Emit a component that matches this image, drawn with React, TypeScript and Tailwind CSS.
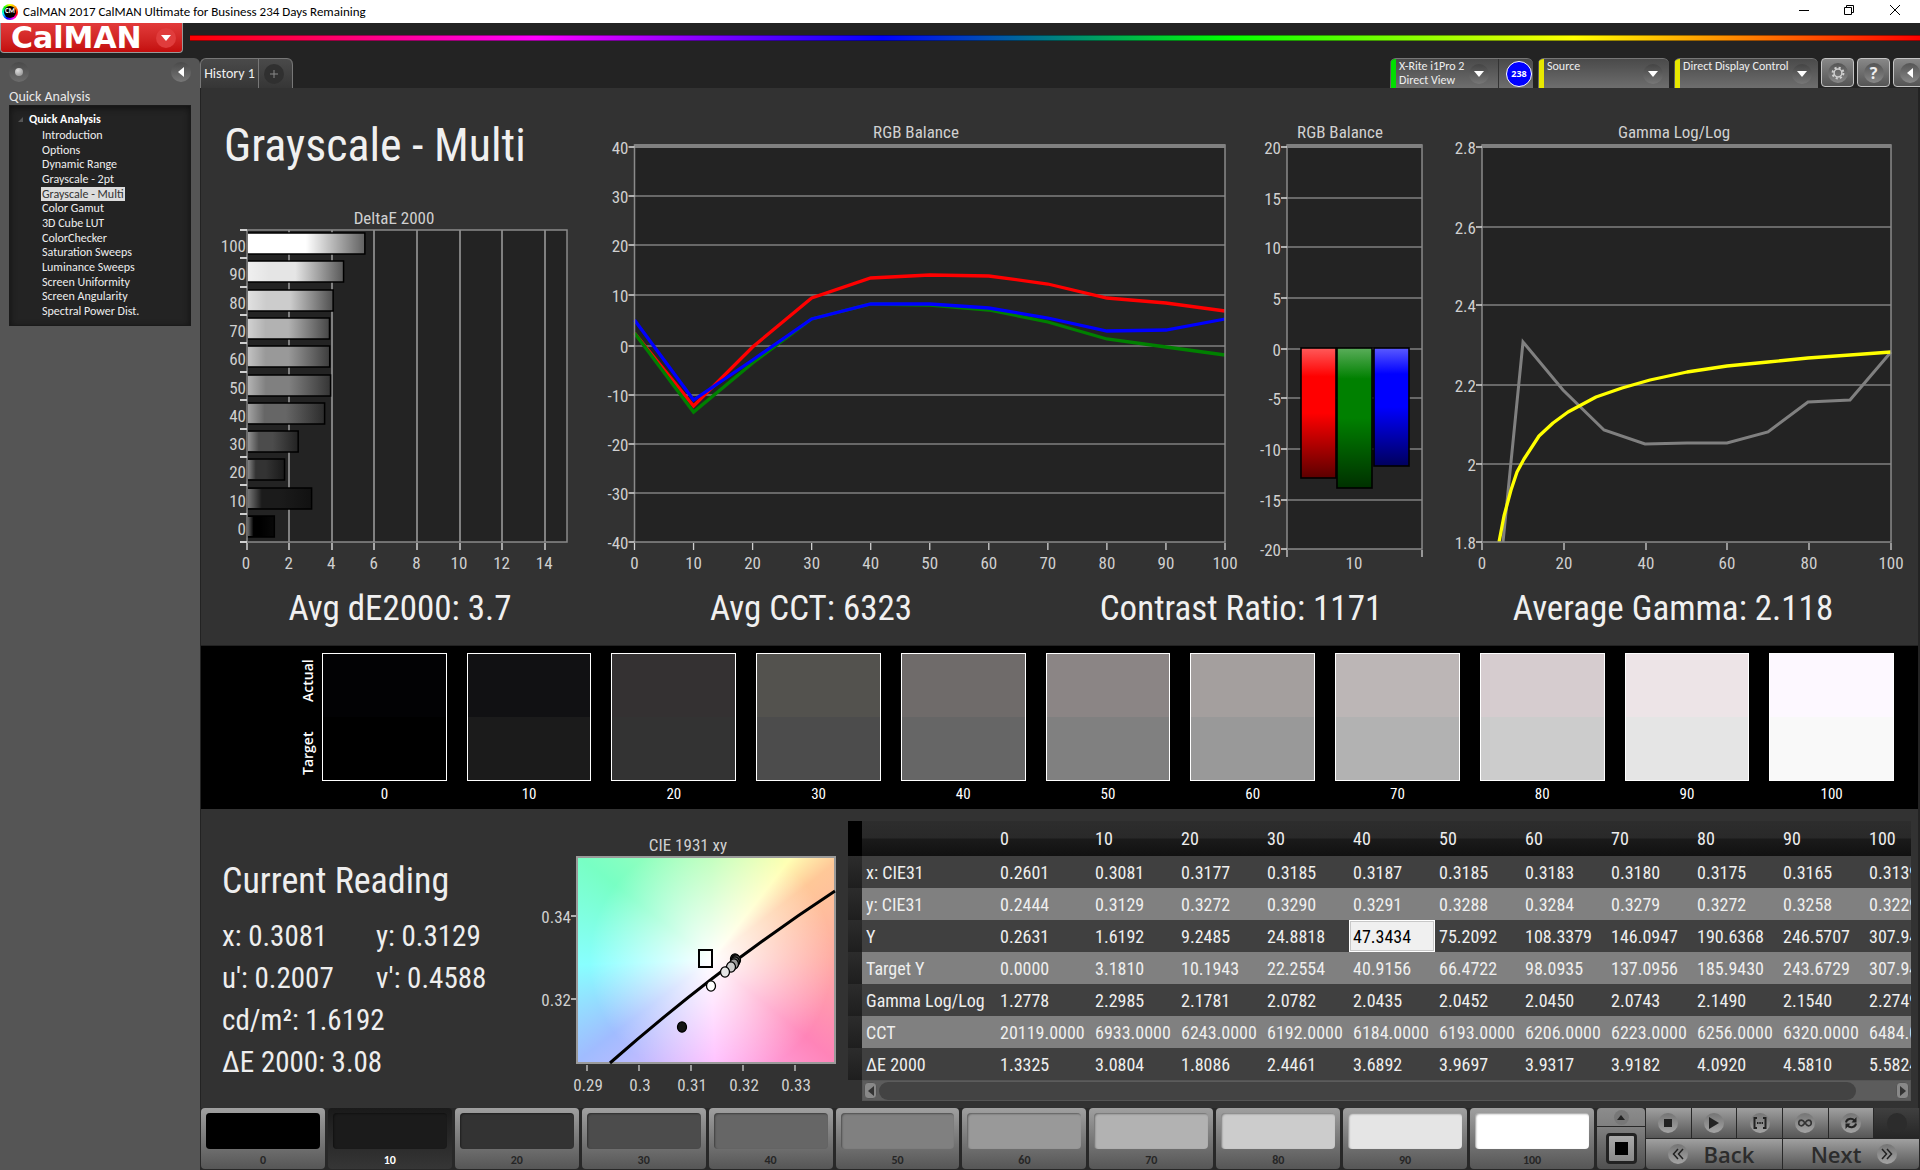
import React from "react";

const LEVELS = [0, 10, 20, 30, 40, 50, 60, 70, 80, 90, 100];
const NARROW = "font-['Roboto_Condensed',Roboto,sans-serif]";
const AXIS = "#d0d0d0";
const GRID = "#808080";
const PLOT = "#232323";

const MENU = [
  "Introduction",
  "Options",
  "Dynamic Range",
  "Grayscale - 2pt",
  "Grayscale - Multi",
  "Color Gamut",
  "3D Cube LUT",
  "ColorChecker",
  "Saturation Sweeps",
  "Luminance Sweeps",
  "Screen Uniformity",
  "Screen Angularity",
  "Spectral Power Dist.",
];

const SWATCHES = [
  ["#020204", "#000000"],
  ["#111113", "#1b1b1b"],
  ["#343132", "#333333"],
  ["#53524e", "#4c4c4c"],
  ["#6f6b6a", "#666666"],
  ["#8b8585", "#808080"],
  ["#a49f9e", "#999999"],
  ["#bcb6b6", "#b2b2b2"],
  ["#d6cccf", "#cccccc"],
  ["#ede4e7", "#e5e5e5"],
  ["#fdf8ff", "#f9f9f9"],
];

const TARGET = SWATCHES.map((s, i) => (i === 10 ? "#ffffff" : s[1]));

const ROWS: [string, string[]][] = [
  ["x: CIE31", ["0.2601", "0.3081", "0.3177", "0.3185", "0.3187", "0.3185", "0.3183", "0.3180", "0.3175", "0.3165", "0.3139"]],
  ["y: CIE31", ["0.2444", "0.3129", "0.3272", "0.3290", "0.3291", "0.3288", "0.3284", "0.3279", "0.3272", "0.3258", "0.3229"]],
  ["Y", ["0.2631", "1.6192", "9.2485", "24.8818", "47.3434", "75.2092", "108.3379", "146.0947", "190.6368", "246.5707", "307.9464"]],
  ["Target Y", ["0.0000", "3.1810", "10.1943", "22.2554", "40.9156", "66.4722", "98.0935", "137.0956", "185.9430", "243.6729", "307.9464"]],
  ["Gamma Log/Log", ["1.2778", "2.2985", "2.1781", "2.0782", "2.0435", "2.0452", "2.0450", "2.0743", "2.1490", "2.1540", "2.2749"]],
  ["CCT", ["20119.0000", "6933.0000", "6243.0000", "6192.0000", "6184.0000", "6193.0000", "6206.0000", "6223.0000", "6256.0000", "6320.0000", "6484.0000"]],
  ["ΔE 2000", ["1.3325", "3.0804", "1.8086", "2.4461", "3.6892", "3.9697", "3.9317", "3.9182", "4.0920", "4.5810", "5.5824"]],
];

type LabelProps = { x: number; y: number; anchor?: "middle" | "end"; children: React.ReactNode };

function Label({ x, y, anchor = "middle", children }: LabelProps) {
  return (
    <text x={x} y={y + 6} textAnchor={anchor} fill={AXIS} className={`${NARROW} text-[17px]`}>
      {children}
    </text>
  );
}

function DeltaEChart() {
  const values = [5.58, 4.58, 4.09, 3.92, 3.93, 3.97, 3.69, 2.45, 1.81, 3.08, 1.33];
  const unit = 21.3;
  return (
    <svg viewBox="201 200 389 376" className="block h-auto w-full" role="img" aria-label="DeltaE 2000">
      <defs>
        {values.map((_, i) => (
          <linearGradient key={i} id={`bar${i}`}>
            <stop offset="0" stopColor={TARGET[10 - i]} />
            <stop offset="0.5" stopColor={TARGET[10 - i]} />
            <stop offset="1" stopColor={TARGET[10 - i]} stopOpacity="0.35" />
          </linearGradient>
        ))}
        <linearGradient id="gloss">
          <stop offset="0" stopColor="#fff" stopOpacity="0.4" />
          <stop offset="0.22" stopColor="#fff" stopOpacity="0" />
        </linearGradient>
      </defs>
      <Label x={394} y={218}>DeltaE 2000</Label>
      <rect x="247" y="230" width="320" height="312" fill={PLOT} />
      {[2, 4, 6, 8, 10, 12, 14].map((v) => (
        <path key={v} d={`M${Math.round(246.5 + v * unit)} 230V542`} stroke={GRID} strokeWidth="2" />
      ))}
      {values.map((v, i) => {
        const y = Math.round(233 + i * 28.3);
        return (
          <g key={i}>
            <rect x="247" y={y} width={v * unit - 1} height="21" fill="#0c0c0c" />
            <rect x="247" y={y} width={v * unit - 1} height="21" fill={`url(#bar${i})`} stroke="#000" strokeWidth="1.5" />
            <rect x="248" y={y + 1} width={v * unit - 3} height="19" fill="url(#gloss)" />
            <Label x={246} y={y + 13} anchor="end">{100 - i * 10}</Label>
          </g>
        );
      })}
      <rect x="247" y="230" width="320" height="312" fill="none" stroke="#8a8a8a" strokeWidth="1.5" />
      {Array.from({ length: 12 }, (_, i) => (
        <path key={i} d={`M240 ${Math.round(230 + i * 28.36)}h7`} stroke={AXIS} strokeWidth="2" />
      ))}
      {[0, 2, 4, 6, 8, 10, 12, 14].map((v) => (
        <g key={v}>
          <path d={`M${Math.round(246.5 + v * unit)} 543v7`} stroke={AXIS} strokeWidth="1.5" />
          <Label x={246 + v * unit} y={563}>{v}</Label>
        </g>
      ))}
    </svg>
  );
}

type FrameProps = {
  x: number;
  width: number;
  bottom: number;
  ys: number[];
  yLabels: string[];
  xs: number[];
  xLabels: string[];
  children?: React.ReactNode;
};

function Frame({ x, width, bottom, ys, yLabels, xs, xLabels, children }: FrameProps) {
  return (
    <>
      <rect x={x} y="145" width={width} height={bottom - 145} fill={PLOT} />
      {ys.slice(1, -1).map((y) => (
        <path key={y} d={`M${x} ${y}h${width}`} stroke={GRID} strokeWidth="1.6" />
      ))}
      {children}
      <rect x={x} y="145" width={width} height={bottom - 145} fill="none" stroke="#8a8a8a" strokeWidth="1.5" />
      <rect x={x} y="144" width={width} height="4" fill={GRID} />
      {ys.map((y, i) => (
        <g key={y}>
          <path d={`M${x - 6} ${y}h6`} stroke={AXIS} strokeWidth="1.6" />
          <Label x={x - 6} y={y + 1} anchor="end">{yLabels[i]}</Label>
        </g>
      ))}
      {xs.map((tx, i) => (
        <g key={tx}>
          <path d={`M${tx} ${bottom + 1}v7`} stroke={AXIS} strokeWidth="1.3" />
          <Label x={tx} y={563}>{xLabels[i]}</Label>
        </g>
      ))}
    </>
  );
}

const line = (xs: number[], ys: number[]) => xs.map((x, i) => `${x},${ys[i]}`).join(" ");

function RgbLineChart() {
  const xs = LEVELS.map((v) => 634.5 + v * 5.905);
  const series: [string, number[]][] = [
    ["#ff0000", [333, 406, 347, 298, 278, 275, 276, 284, 298, 303, 311]],
    ["#008000", [333, 412, 363, 319, 304, 305, 310, 322, 339, 347, 355]],
    ["#0000ff", [320, 400, 360, 319, 304, 304, 308, 318, 331, 330, 319]],
  ];
  return (
    <svg viewBox="590 88 650 488" className="block h-auto w-full" role="img" aria-label="RGB Balance by level">
      <Label x={916} y={132}>RGB Balance</Label>
      <Frame
        x={634.5}
        width={590.5}
        bottom={542}
        ys={[147, 196, 245, 295, 346, 395, 444, 493, 542]}
        yLabels={["40", "30", "20", "10", "0", "-10", "-20", "-30", "-40"]}
        xs={xs}
        xLabels={LEVELS.map(String)}
      >
        {series.map(([color, ys]) => (
          <polyline key={color} points={line(xs, ys)} fill="none" stroke={color} strokeWidth="3.3" />
        ))}
      </Frame>
    </svg>
  );
}

function RgbBarChart() {
  const bars: [number, number, string, string, string][] = [
    [1301, 131, "#ff5a5a", "#ff0000", "#5c0000"],
    [1337, 141, "#5aad5a", "#008000", "#003000"],
    [1374, 119, "#5a5aff", "#0000ff", "#00005c"],
  ];
  return (
    <svg viewBox="1240 88 200 488" className="block h-auto w-full" role="img" aria-label="RGB Balance at 10">
      <defs>
        {bars.map(([x, , top, mid, end]) => (
          <linearGradient key={x} id={`rgb${x}`} x1="0" y1="0" x2="0" y2="1">
            <stop offset="0" stopColor={top} />
            <stop offset="0.22" stopColor={mid} />
            <stop offset="0.5" stopColor={mid} />
            <stop offset="1" stopColor={end} />
          </linearGradient>
        ))}
      </defs>
      <Label x={1340} y={132}>RGB Balance</Label>
      <Frame
        x={1287}
        width={135}
        bottom={549}
        ys={[147, 198, 247, 298, 349, 398, 449, 500, 549]}
        yLabels={["20", "15", "10", "5", "0", "-5", "-10", "-15", "-20"]}
        xs={[1287, 1422]}
        xLabels={["", ""]}
      >
        {bars.map(([x, h]) => (
          <rect key={x} x={x} y="348" width="35" height={h - 1} fill={`url(#rgb${x})`} stroke="#000" strokeWidth="1.6" />
        ))}
      </Frame>
      <Label x={1354} y={563}>10</Label>
    </svg>
  );
}

function GammaChart() {
  const gx = [1503, 1523, 1563, 1604, 1645, 1687, 1727, 1768, 1808, 1850, 1891];
  const gy = [542, 342, 390, 430, 444, 443, 443, 432, 402, 400, 352];
  const yx = [1499, 1504, 1511, 1517, 1524, 1539, 1553, 1568, 1596, 1622, 1650, 1687, 1727, 1768, 1808, 1850, 1891];
  const yy = [542, 516, 490, 472, 459, 436, 423, 412, 397, 388, 380, 372, 366, 362, 358, 355, 352];
  return (
    <svg viewBox="1440 88 478 488" className="block h-auto w-full" role="img" aria-label="Gamma Log/Log">
      <Label x={1674} y={132}>Gamma Log/Log</Label>
      <Frame
        x={1482}
        width={409}
        bottom={542}
        ys={[147, 227, 305, 385, 464, 542]}
        yLabels={["2.8", "2.6", "2.4", "2.2", "2", "1.8"]}
        xs={[1482, 1564, 1646, 1727, 1809, 1891]}
        xLabels={["0", "20", "40", "60", "80", "100"]}
      >
        <polyline points={line(gx, gy)} fill="none" stroke="#808080" strokeWidth="3" />
        <polyline points={line(yx, yy)} fill="none" stroke="#ffff00" strokeWidth="3.3" strokeLinejoin="round" />
      </Frame>
    </svg>
  );
}

function CieChart() {
  const dots: [number, number, string][] = [
    [682, 1027, "#141414"],
    [735, 959, "#333"],
    [736, 960, "#4c4c4c"],
    [735, 962, "#666"],
    [734, 964, "#999"],
    [731, 967, "#ccc"],
    [725, 972, "#e5e5e5"],
    [711, 986, "#fff"],
  ];
  return (
    <svg viewBox="530 821 318 280" className="block h-auto w-full" role="img" aria-label="CIE 1931 xy">
      <Label x={688} y={845}>CIE 1931 xy</Label>
      <foreignObject x="577" y="857" width="258" height="206">
        <div className="h-full w-full bg-[radial-gradient(circle_at_52%_50%,#ffffff_0%,#ffffff00_72%),conic-gradient(from_0deg_at_52%_50%,#b8ffb4_0deg,#ffffb4_38deg,#ffc898_52deg,#ffaca4_90deg,#ff84b8_129deg,#ffb8ff_178deg,#a0bcff_233deg,#88ffff_268deg,#78ffc4_308deg,#b8ffb4_360deg)]" />
      </foreignObject>
      <rect x="577" y="857" width="258" height="206" fill="none" stroke="#9a9a9a" strokeWidth="2" />
      <path d="M610 1063Q719 967 835 891" fill="none" stroke="#000" strokeWidth="3" />
      <rect x="699" y="950" width="13" height="17" fill="none" stroke="#000" strokeWidth="2" />
      {dots.map(([x, y, fill]) => (
        <ellipse key={`${x}-${y}`} cx={x} cy={y} rx="4.5" ry="5.2" fill={fill} stroke="#000" strokeWidth="1.3" />
      ))}
      {[916, 999].map((y, i) => (
        <g key={y}>
          <path d={`M571 ${y}h5`} stroke={AXIS} strokeWidth="1.6" />
          <Label x={571} y={y + 1} anchor="end">{["0.34", "0.32"][i]}</Label>
        </g>
      ))}
      {[587, 639, 691, 743, 795].map((x, i) => (
        <g key={x}>
          <path d={`M${x} 1065v6`} stroke={AXIS} strokeWidth="1.3" />
          <Label x={x + 1} y={1085}>{["0.29", "0.3", "0.31", "0.32", "0.33"][i]}</Label>
        </g>
      ))}
    </svg>
  );
}

function RoundArrow() {
  return (
    <span className="flex size-5 shrink-0 items-center justify-center rounded-full bg-linear-to-b from-[#444] to-[#777]">
      <svg viewBox="0 0 10 6" className="h-1.5 w-2.5"><path d="M0 0h10L5 6z" fill="#fff" /></svg>
    </span>
  );
}

function TitleBar() {
  return (
    <header className="flex h-[23px] items-center bg-white pr-[2px] pl-[2px] font-[Carlito,Lato,sans-serif] text-[13px] text-black">
      <span className="flex size-4 items-center justify-center rounded-full bg-[conic-gradient(#ff0,#f80,#f00,#f0f,#00f,#0ff,#0f0,#ff0)]">
        <span className="flex size-3 items-center justify-center rounded-full bg-black text-[7px] font-bold text-white">CM</span>
      </span>
      <span className="ml-[5px]">CalMAN 2017 CalMAN Ultimate for Business 234 Days Remaining</span>
      <div className="ml-auto flex pb-[3px]">
        <button aria-label="Minimize" className="flex h-5 w-[45px] items-center justify-center">
          <svg viewBox="0 0 10 10" className="size-[10px]"><path d="M0 5.5h10" stroke="#000" /></svg>
        </button>
        <button aria-label="Restore" className="flex h-5 w-[46px] items-center justify-center">
          <svg viewBox="0 0 10 10" className="size-[10px]"><path d="M.5 2.5h7v7h-7zM2.5 2.5v-2h7v7h-2" fill="none" stroke="#000" /></svg>
        </button>
        <button aria-label="Close" className="flex h-5 w-[46px] items-center justify-center">
          <svg viewBox="0 0 10 10" className="size-[10px]"><path d="M0 0l10 10M10 0L0 10" stroke="#000" /></svg>
        </button>
      </div>
    </header>
  );
}

function Sidebar() {
  return (
    <aside className="w-[200px] shrink-0 rounded-tr-md bg-[#555] px-[9px] font-[Carlito,Lato,sans-serif] text-white">
      <div className="flex items-center justify-between pt-1">
        <span className="flex size-5 items-center justify-center rounded-full bg-linear-to-b from-[#4a4a4a] to-[#6c6c6c]">
          <span className="size-2 rounded-full bg-[radial-gradient(circle_at_35%_30%,#ddd,#888)]" />
        </span>
        <button aria-label="Collapse" className="flex size-5 items-center justify-center rounded-full bg-linear-to-b from-[#4a4a4a] to-[#777]">
          <svg viewBox="0 0 6 10" className="h-2.5 w-1.5"><path d="M6 0v10L0 5z" fill="#fff" /></svg>
        </button>
      </div>
      <h2 className="mt-[7px] text-[14px] leading-[15px] text-[#e8e8e8]">Quick Analysis</h2>
      <nav className="mt-px h-[221px] border border-[#1a1a1a] bg-[#232323] pt-[6px] shadow-[inset_0_2px_6px_#111]">
        <p className="flex items-center text-[12px] leading-[14px] font-bold">
          <svg viewBox="0 0 5 5" className="mr-[6px] ml-2 size-[5px]"><path d="M5 0v5H0z" fill="#555" /></svg>
          Quick Analysis
        </p>
        <ul className="mt-[2px] ml-8 flex h-[190px] flex-col justify-between text-[12px] leading-[14px] text-[#eee]">
          {MENU.map((m) => (
            <li key={m}>
              <a href="#" className={m === "Grayscale - Multi" ? "-ml-px inline-block bg-[#dcdcdc] px-px text-[#333]" : "inline-block"}>{m}</a>
            </li>
          ))}
        </ul>
      </nav>
    </aside>
  );
}

function Tab({ color, children, className }: { color: string; children: React.ReactNode; className: string }) {
  return (
    <div className={`flex h-[30px] overflow-hidden rounded-t-md border-t border-[#777] bg-linear-to-b from-[#4a4a4a] to-[#6e6e6e] pl-px ${className}`}>
      <span className={`w-[5px] shrink-0 ${color}`} />
      {children}
    </div>
  );
}

function Toolbar() {
  const square = "flex h-[29px] w-[33px] shrink-0 items-center justify-center rounded border border-[#c4c4c4] bg-linear-to-b from-[#888] to-[#555]";
  const disc = "flex size-5 items-center justify-center rounded-full bg-linear-to-b from-[#555] to-[#888]";
  return (
    <div className="flex h-[30px] items-start font-[Carlito,Lato,sans-serif] text-[#eee]">
      <div className="flex h-[30px] rounded-t-md border-t border-l border-[#777] bg-linear-to-b from-[#4a4a4a] to-[#363636] text-[14px]">
        <button className="flex w-[58px] items-center justify-center border-r border-[#777]">History 1</button>
        <button aria-label="Add history" className="flex w-[34px] items-center justify-center rounded-tr-md border-r border-[#777] pr-[3px]">
          <span className="flex size-5 items-center justify-center rounded-full bg-[#303030] text-[#777]">
            <svg viewBox="0 0 8 8" className="size-2"><path d="M4 0v8M0 4h8" stroke="#888" /></svg>
          </span>
        </button>
      </div>
      <div className="ml-auto flex h-[30px] text-[12px] leading-[14px]">
        <Tab color="bg-[#00e000]" className="w-[143px]">
          <button className="flex flex-1 items-start justify-between pr-[9px] pl-[3px] text-left">
            <span>X-Rite i1Pro 2<br />Direct View</span>
            <span className="mt-[5px]"><RoundArrow /></span>
          </button>
          <span className="w-px bg-[#333]" />
          <span className="flex w-[34px] items-center justify-end pr-px">
            <span className="flex size-[26px] items-center justify-center rounded-full border border-white bg-[#0000ff] font-['Open_Sans',sans-serif] text-[9px] font-bold text-white">238</span>
          </span>
        </Tab>
        <Tab color="bg-[#e8e800]" className="ml-[5px] w-[131px]">
          <button className="flex flex-1 items-start justify-between pr-[6px] pl-[3px] text-left">
            Source
            <span className="mt-[5px]"><RoundArrow /></span>
          </button>
        </Tab>
        <Tab color="bg-[#e8e800]" className="ml-[5px] w-[144px]">
          <button className="flex flex-1 items-start justify-between pr-[6px] pl-[3px] text-left whitespace-nowrap">
            Direct Display Control
            <span className="mt-[5px]"><RoundArrow /></span>
          </button>
        </Tab>
        <div className="ml-[3px] flex w-[99px] gap-[3px] overflow-hidden">
          <button aria-label="Settings" className={square}>
            <span className={disc}>
              <svg viewBox="0 0 14 14" className="size-3.5">
                <circle cx="7" cy="7" r="5.4" fill="none" stroke="#d0d0d0" strokeWidth="2" strokeDasharray="2.1 2.14" />
                <circle cx="7" cy="7" r="3.9" fill="none" stroke="#d0d0d0" strokeWidth="1.5" />
              </svg>
            </span>
          </button>
          <button aria-label="Help" className={`${square} font-['Open_Sans',sans-serif] text-[16px] font-bold`}><span className={disc}>?</span></button>
          <button aria-label="Collapse toolbar" className={square}>
            <span className={disc}><svg viewBox="0 0 6 10" className="h-2.5 w-1.5"><path d="M6 0v10L0 5z" fill="#fff" /></svg></span>
          </button>
        </div>
      </div>
    </div>
  );
}

function SwatchStrip() {
  return (
    <section className={`flex h-[163px] bg-black pt-[7px] pr-6 text-white ${NARROW}`}>
      <div className="flex h-32 w-[121px] shrink-0 flex-col items-end pr-1 font-['Open_Sans',sans-serif] text-[14px] font-semibold">
        <span className="flex h-16 rotate-180 items-center justify-center pt-2 [writing-mode:vertical-rl]">Actual</span>
        <span className="flex h-16 rotate-180 items-center justify-center pb-2 [writing-mode:vertical-rl]">Target</span>
      </div>
      <div className="grid flex-1 grid-cols-11 gap-5">
        {SWATCHES.map(([actual, target], i) => (
          <div key={i} className="text-center">
            <div className="flex h-32 flex-col border border-white">
              <div className="flex-1" style={{ background: actual }} />
              <div className="flex-1" style={{ background: target }} />
            </div>
            <p className="mt-1 text-[15px] leading-[18px]">{i * 10}</p>
          </div>
        ))}
      </div>
    </section>
  );
}

function Readings() {
  return (
    <div className={`pt-[39px] pl-[21px] text-[#eee] ${NARROW}`}>
      <h2 className="text-[36px] leading-[42px]">Current Reading</h2>
      <div className="mt-[13px] grid grid-cols-[154px_1fr] text-[29px] leading-[42px]">
        <span>x: 0.3081</span>
        <span>y: 0.3129</span>
        <span>u': 0.2007</span>
        <span>v': 0.4588</span>
        <span className="col-span-2">cd/m²: 1.6192</span>
        <span className="col-span-2">ΔE 2000: 3.08</span>
      </div>
    </div>
  );
}

function DataTable() {
  return (
    <div className="min-w-0 overflow-hidden">
      <table className={`w-[1103px] table-fixed border-collapse text-left text-[18px] leading-[28px] text-[#eee] ${NARROW}`}>
        <colgroup>
          <col className="w-[14px]" />
          <col className="w-[134px]" />
          <col className="w-[95px]" />
          {LEVELS.slice(1).map((l) => (
            <col key={l} className="w-[86px]" />
          ))}
        </colgroup>
        <thead>
          <tr className="h-[35px] bg-[linear-gradient(#2d2d2d_0%,#292929_48%,#1a1a1a_52%,#111_100%)]">
            <th className="bg-black" />
            <th />
            {LEVELS.map((l) => (
              <th key={l} className="p-0 pl-1 font-normal">{l}</th>
            ))}
          </tr>
        </thead>
        <tbody>
          {ROWS.map(([name, cells], r) => (
            <tr key={name} className={r % 2 ? "h-8 bg-[#808080]" : "h-8 bg-[#404040]"}>
              <td className="bg-linear-to-b from-[#2c2c2c] to-[#1e1e1e] p-0" />
              <th scope="row" className="p-0 pt-px pl-1 font-normal whitespace-nowrap">{name}</th>
              {cells.map((c, i) => (
                <td
                  key={i}
                  className={
                    r === 2 && i === 4
                      ? "bg-[#f0f0f0] p-0 pt-px pl-1 text-black shadow-[inset_0_0_0_1px_#fff,inset_0_0_0_2px_#c8c8c8]"
                      : "p-0 pt-px pl-1"
                  }
                >
                  {c}
                </td>
              ))}
            </tr>
          ))}
        </tbody>
      </table>
      <div className="ml-[14px] flex h-[21px] items-center justify-between border border-[#555] bg-[#5c5c5c] px-px">
        <button aria-label="Scroll left" className="flex h-[17px] w-[13px] items-center justify-center rounded-sm border border-[#555] bg-[#888]">
          <svg viewBox="0 0 6 10" className="h-2.5 w-1.5"><path d="M6 0v10L0 5z" fill="#333" /></svg>
        </button>
        <div className="mr-[40px] ml-[2px] h-[18px] flex-1 rounded-full bg-[#434343]" />
        <button aria-label="Scroll right" className="flex h-[17px] w-[13px] items-center justify-center rounded-sm border border-[#555] bg-[#888]">
          <svg viewBox="0 0 6 10" className="h-2.5 w-1.5"><path d="M0 0v10l6-5z" fill="#333" /></svg>
        </button>
      </div>
    </div>
  );
}

const SHINE = "bg-linear-to-b from-[#a0a0a0] to-[#565656]";

function Disc({ children }: { children?: React.ReactNode }) {
  return (
    <span className="flex size-5 items-center justify-center rounded-full bg-linear-to-b from-[#757575] to-[#a4a4a4]">
      {children}
    </span>
  );
}

function BottomBar() {
  const small = `flex items-center justify-center ${SHINE}`;
  return (
    <footer className="flex h-[62px] gap-[2px] bg-[#282828] px-px pb-px font-[Carlito,Lato,sans-serif]">
      <div className="grid flex-1 grid-cols-11 gap-[3px] pr-px">
        {LEVELS.map((l, i) => (
          <button
            key={l}
            className={
              l === 10
                ? "flex flex-col rounded bg-linear-to-b from-[#1a1a1a] to-[#363636] px-[5px] pt-[5px] text-[12px] font-bold text-white"
                : "flex flex-col rounded bg-linear-to-b from-[#a0a0a0] to-[#565656] px-[5px] pt-[5px] text-[12px] font-bold text-[#262626]"
            }
          >
            <span className="block h-9 w-full rounded shadow-[inset_1px_1px_2px_#0006]" style={{ background: TARGET[i] }} />
            <span className="w-full pt-[3px] text-center leading-[16px]">{l}</span>
          </button>
        ))}
      </div>
      <div className="flex w-12 shrink-0 flex-col gap-px overflow-hidden rounded">
        <button aria-label="Expand" className="flex h-[18px] items-center justify-center bg-linear-to-b from-[#8c8c8c] to-[#808080]">
          <span className="flex size-[15px] items-center justify-center rounded-full bg-[#777]">
            <svg viewBox="0 0 8 5" className="h-[5px] w-2"><path d="M4 0l4 5H0z" fill="#222" /></svg>
          </span>
        </button>
        <button aria-label="Pattern window" className="flex flex-1 items-center justify-center bg-linear-to-b from-[#808080] to-[#505050]">
          <span className="flex size-[31px] items-center justify-center rounded border-[3px] border-[#222] bg-linear-to-b from-[#aaa] to-[#888]">
            <span className="size-[13px] bg-black" />
          </span>
        </button>
      </div>
      <div className="-ml-px flex w-[273px] shrink-0 flex-col gap-px overflow-hidden">
        <div className="grid h-[30px] grid-cols-6 gap-px">
          <button aria-label="Stop" className={small}><Disc><span className="size-2 bg-[#222]" /></Disc></button>
          <button aria-label="Play" className={small}>
            <Disc><svg viewBox="0 0 10 12" className="h-3 w-2.5"><path d="M0 0v12l10-6z" fill="#222" /></svg></Disc>
          </button>
          <button aria-label="Read series" className={small}>
            <Disc>
              <svg viewBox="0 0 14 12" className="h-3 w-3.5">
                <path d="M4 1H1.500v10H4M10 1h2.500v10H10" fill="none" stroke="#222" strokeWidth="2" />
                <path d="M4 6h6" stroke="#222" strokeWidth="2" strokeDasharray="1.500 .8" />
              </svg>
            </Disc>
          </button>
          <button aria-label="Continuous" className={small}>
            <Disc>
              <svg viewBox="0 0 14 8" className="h-2 w-3.5">
                <path d="M7 4C5.500 2 4.800 1.200 3.500 1.200a2.800 2.800 0 0 0 0 5.600C4.800 6.800 5.500 6 7 4s2.200-2.800 3.500-2.800a2.800 2.800 0 0 1 0 5.600C9.200 6.800 8.500 6 7 4z" fill="none" stroke="#333" strokeWidth="1.700" />
              </svg>
            </Disc>
          </button>
          <button aria-label="Refresh" className={small}>
            <Disc>
              <svg viewBox="0 0 14 14" className="size-3.5">
                <path d="M2 6.500C2.500 3 7.500 1.500 10.500 4.500M12 7.500C11.500 11 6.500 12.500 3.500 9.500" fill="none" stroke="#222" strokeWidth="2" />
                <path d="M12.500 1v5.500H7.500zM1.500 13V7.500h5z" fill="#222" />
              </svg>
            </Disc>
          </button>
          <span className="flex items-center justify-center bg-linear-to-b from-[#404040] to-[#262626]">
            <span className="size-5 rounded-full bg-[#2c2c2c]" />
          </span>
        </div>
        <div className="grid flex-1 grid-cols-2 gap-px font-['Open_Sans',sans-serif] text-[22px] leading-[28px] font-semibold text-[#2c2c2c]">
          <button className={`flex items-center justify-center gap-4 rounded-bl pr-[6px] ${SHINE}`}>
            <Disc>
              <svg viewBox="0 0 12 12" className="size-3"><path d="M6 1L1.500 6 6 11M11 1L6.500 6l4.500 5" fill="none" stroke="#222" strokeWidth="1.500" /></svg>
            </Disc>
            Back
          </button>
          <button className={`flex items-center justify-center gap-4 rounded-br pl-[6px] ${SHINE}`}>
            Next
            <Disc>
              <svg viewBox="0 0 12 12" className="size-3"><path d="M1 1l4.500 5L1 11M6 1l4.500 5L6 11" fill="none" stroke="#222" strokeWidth="1.500" /></svg>
            </Disc>
          </button>
        </div>
      </div>
    </footer>
  );
}

export default function App() {
  return (
    <div className="flex min-h-screen flex-col bg-[#232323]">
      <TitleBar />
      <div className="flex h-[35px]">
        <button className="flex h-[30px] w-[183px] shrink-0 items-center justify-between rounded-b border border-t-0 border-[#999] bg-linear-to-b from-[#e23a3a] to-[#c40c0c] pr-[6px] pl-[10px] font-['DejaVu_Sans',sans-serif] text-[30px] leading-[28px] font-bold text-white">
          CalMAN
          <span className="flex size-5 items-center justify-center rounded-full bg-[#e03c3c]">
            <svg viewBox="0 0 10 6" className="h-1.5 w-2.5"><path d="M0 0h10L5 6z" fill="#fff" /></svg>
          </span>
        </button>
        <div className="mt-3 ml-[7px] h-[6px] flex-1 border-y border-black/40 bg-[linear-gradient(90deg,#f00,#f0f,#00f,#0f0,#ff0,#f00)]" />
      </div>
      <div className="flex flex-1">
        <Sidebar />
        <div className="flex min-w-0 flex-1 flex-col">
          <Toolbar />
          <main className="flex flex-1 flex-col border-r-2 border-l border-[#232323] bg-[#323232]">
            <section className="grid grid-cols-[389fr_650fr_200fr_478fr]">
              <div>
                <h1 className={`h-[112px] pt-[29px] pl-[23px] text-[46px] leading-[56px] whitespace-nowrap text-[#f0f0f0] ${NARROW}`}>Grayscale - Multi</h1>
                <DeltaEChart />
              </div>
              <RgbLineChart />
              <RgbBarChart />
              <GammaChart />
            </section>
            <section className={`grid h-[70px] grid-cols-[398fr_424fr_436fr_428fr_31fr] border-b border-[#222] pt-[9px] text-center text-[35px] leading-[48px] text-[#f0f0f0] ${NARROW}`}>
              <p>Avg dE2000: 3.7</p>
              <p>Avg CCT: 6323</p>
              <p>Contrast Ratio: 1171</p>
              <p>Average Gamma: 2.118</p>
            </section>
            <SwatchStrip />
            <section className="grid flex-1 grid-cols-[329fr_318fr_1063fr] pt-3 pr-[7px] pb-[6px]">
              <Readings />
              <CieChart />
              <DataTable />
            </section>
          </main>
          <BottomBar />
        </div>
      </div>
    </div>
  );
}
